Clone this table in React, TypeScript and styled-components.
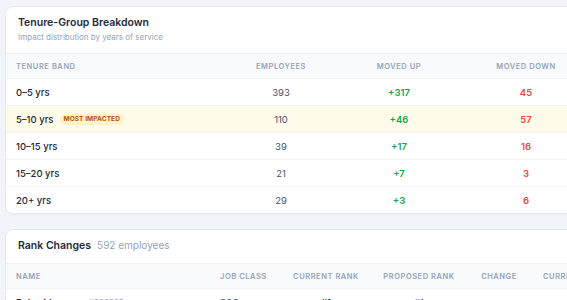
import React from 'react'
import styled, { createGlobalStyle } from 'styled-components'

const GlobalStyle = createGlobalStyle`
  html, body {
    margin: 0;
    padding: 0;
    background: #f1f5f9;
    overflow: hidden;
  }
  body {
    font-family: Inter, "Liberation Sans", sans-serif;
    color: #1e293b;
  }
`

const Page = styled.main`
  width: 660px;
  padding: 6px 0 0 5px;
  display: flex;
  flex-direction: column;
  gap: 15px;
`

const Card = styled.section`
  background: #ffffff;
  border: 1px solid #e6ebf1;
  border-radius: 8px;
  overflow: hidden;
  box-shadow: 0 1px 2px rgba(15, 23, 42, 0.04);
`

const CardHeader = styled.header`
  padding: 9px 12px 10px 12px;
`

const TitleRow = styled.div`
  display: flex;
  align-items: baseline;
  gap: 6px;
`

const Title = styled.h3`
  margin: 0;
  font-size: 10.5px;
  line-height: 14px;
  font-weight: 600;
  color: #1e293b;
`

const Count = styled.span`
  font-size: 10px;
  color: #94a3b8;
`

const Subtitle = styled.p`
  margin: 1px 0 0 0;
  font-size: 8px;
  line-height: 12px;
  color: #94a3b8;
`

const Row = styled.div<{ $cols: string; $head?: boolean; $hl?: boolean }>`
  display: grid;
  grid-template-columns: ${p => p.$cols};
  align-items: center;
  height: ${p => (p.$head ? '25px' : '27px')};
  background: ${p => (p.$head ? '#f8fafc' : p.$hl ? '#fffbeb' : '#ffffff')};
  border-top: 1px solid ${p => (p.$head ? '#eef2f6' : '#f1f5f9')};
  box-sizing: border-box;
`

const Cell = styled.div<{ $align?: 'left' | 'center'; $pl?: number }>`
  display: flex;
  align-items: center;
  justify-content: ${p => (p.$align === 'left' ? 'flex-start' : 'center')};
  padding: 0 12px;
  padding-left: ${p => (p.$pl !== undefined ? `${p.$pl}px` : '12px')};
  white-space: nowrap;
  gap: 6px;
`

const Th = styled(Cell)`
  font-size: 7.5px;
  font-weight: 600;
  letter-spacing: 0.55px;
  text-transform: uppercase;
  color: #94a3b8;
`

const Td = styled(Cell)<{ $tone?: 'up' | 'down' | 'strong' | 'muted' | 'name' }>`
  font-size: 9.5px;
  color: ${p =>
    p.$tone === 'up'
      ? '#16a34a'
      : p.$tone === 'down'
      ? '#ef4444'
      : p.$tone === 'name' || p.$tone === 'strong'
      ? '#1e293b'
      : '#475569'};
  font-weight: ${p =>
    p.$tone === 'up' || p.$tone === 'down' || p.$tone === 'strong' ? 600 : p.$tone === 'name' ? 500 : 400};
`

const Badge = styled.span`
  display: inline-flex;
  align-items: center;
  height: 11px;
  padding: 0 4px;
  border-radius: 6px;
  background: #fef3c7;
  color: #b45309;
  font-size: 6.5px;
  font-weight: 700;
  letter-spacing: 0.1px;
  text-transform: uppercase;
`

const EmpId = styled.span`
  font-size: 8px;
  font-weight: 400;
  color: #94a3b8;
`

const tenureCols = '216px 118px 118px 136px 1fr'
const rankCols = '202px 73px 90px 96px 64px 1fr'

const tenure = [
  { band: '0–5 yrs', employees: 393, up: 317, down: 45 },
  { band: '5–10 yrs', employees: 110, up: 46, down: 57, hot: true },
  { band: '10–15 yrs', employees: 39, up: 17, down: 16 },
  { band: '15–20 yrs', employees: 21, up: 7, down: 3 },
  { band: '20+ yrs', employees: 29, up: 3, down: 6 },
]

export default function App() {
  return (
    <>
      <GlobalStyle />
      <Page>
        <Card>
          <CardHeader>
            <Title>Tenure-Group Breakdown</Title>
            <Subtitle>Impact distribution by years of service</Subtitle>
          </CardHeader>
          <Row $cols={tenureCols} $head>
            <Th $align="left" $pl={10}>Tenure Band</Th>
            <Th>Employees</Th>
            <Th>Moved Up</Th>
            <Th>Moved Down</Th>
            <Th />
          </Row>
          {tenure.map(t => (
            <Row key={t.band} $cols={tenureCols} $hl={t.hot}>
              <Td $align="left" $pl={10} $tone="name">
                {t.band}
                {t.hot && <Badge>Most Impacted</Badge>}
              </Td>
              <Td>{t.employees}</Td>
              <Td $tone="up">+{t.up}</Td>
              <Td $tone="down">{t.down}</Td>
              <Td />
            </Row>
          ))}
        </Card>

        <Card>
          <CardHeader>
            <TitleRow>
              <Title>Rank Changes</Title>
              <Count>592 employees</Count>
            </TitleRow>
          </CardHeader>
          <Row $cols={rankCols} $head>
            <Th $align="left" $pl={10}>Name</Th>
            <Th $align="left">Job Class</Th>
            <Th>Current Rank</Th>
            <Th>Proposed Rank</Th>
            <Th>Change</Th>
            <Th $align="left">Current Salary</Th>
          </Row>
          <Row $cols={rankCols}>
            <Td $align="left" $pl={10} $tone="strong">
              Robert Lanoue <EmpId>#026989</EmpId>
            </Td>
            <Td $align="left">SSC</Td>
            <Td $tone="strong">#1</Td>
            <Td>#1</Td>
            <Td>—</Td>
            <Td />
          </Row>
        </Card>
      </Page>
    </>
  )
}
